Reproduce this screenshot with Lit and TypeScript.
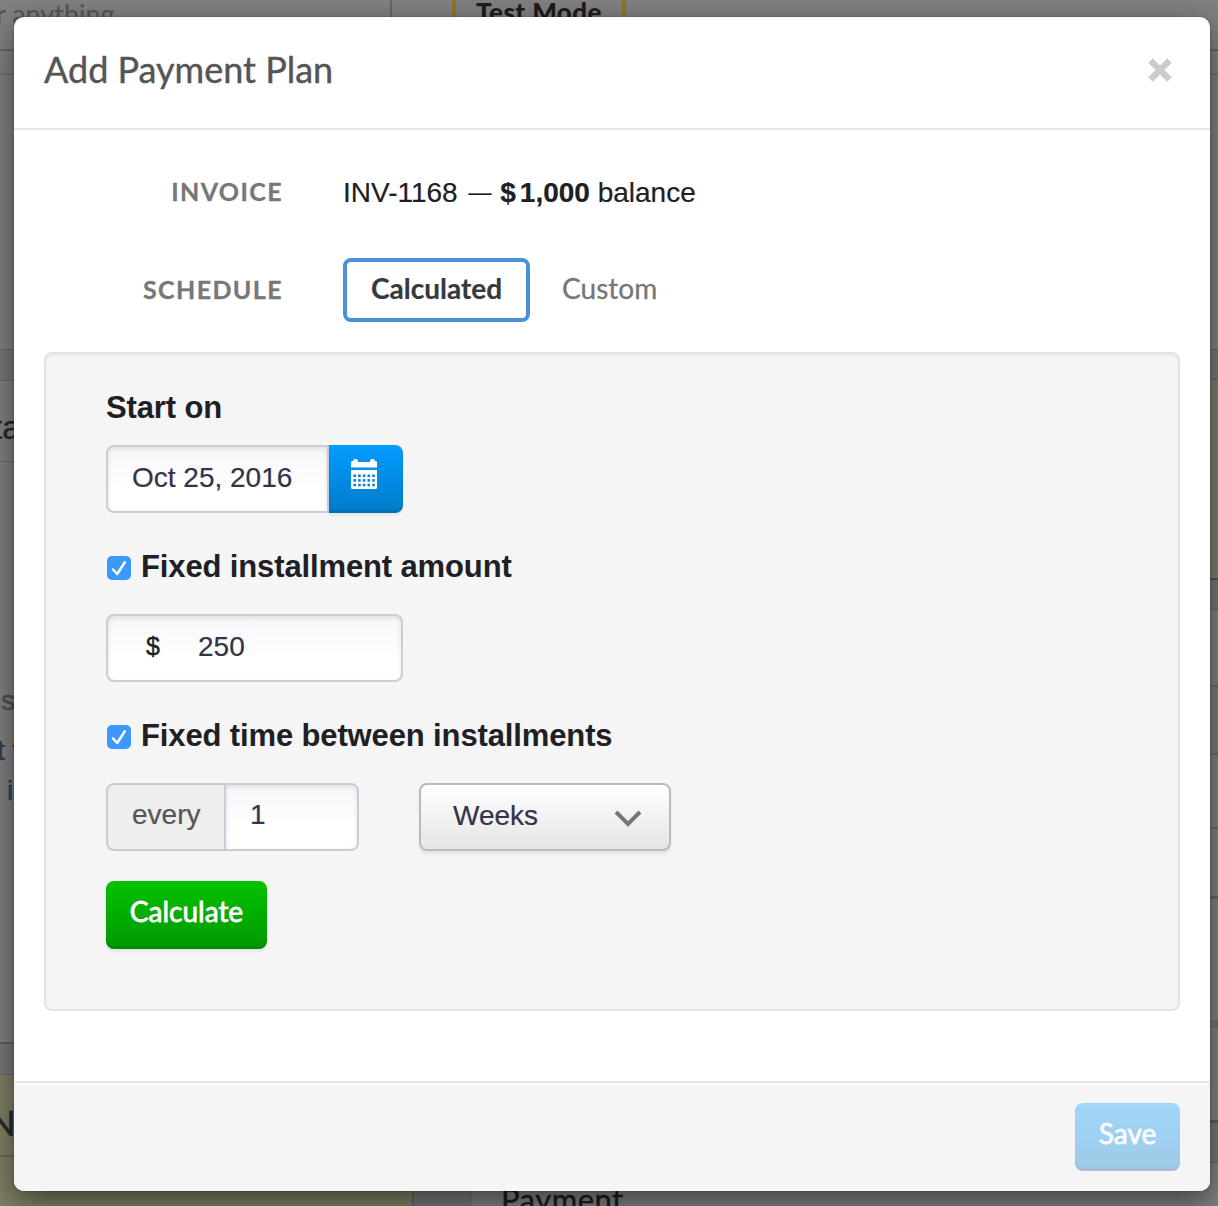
import { LitElement, html, css, svg } from "lit";
import { customElement, state } from "lit/decorators.js";

const calendarDots = [0, 1, 2].flatMap((r) =>
  [0, 1, 2, 3, 4].map((c) => svg`<rect x=${2.4 + c * 4.7} y=${16.5 + r * 4.6} width="2.6" height="2.6" fill="#0384d6"/>`),
);

@customElement("page-backdrop")
class PageBackdrop extends LitElement {
  static styles = css`
    :host { display: flex; flex-direction: column; height: 1206px; overflow: hidden; background: #808080;
      font-family: "Liberation Sans", Arial, sans-serif; }
    * { box-sizing: border-box; }
    .top { display: flex; height: 51px; border-bottom: 2px solid #666; overflow: hidden; }
    .search { width: 392px; border-right: 2px solid #676767; color: #555; font: 27px/28px Lato, sans-serif; white-space: nowrap; }
    .search span { display: block; margin-left: -4px; }
    .mode { margin-left: 60px; width: 174px; border: 4px solid #91752a; border-width: 0 4px; text-align: center;
      font: 900 26px/25px Lato, sans-serif; color: #1c1c1c; letter-spacing: .4px; }
    .sub { height: 24px; border-bottom: 2px solid #717171; }
    .cols { display: flex; flex: 1; }
    .left { width: 412px; }
    .right { flex: 1; }
    .cols, .sec { overflow: hidden; }
    .sec { border-bottom: 1px solid #686868; white-space: nowrap; }
    .alt { background: #7a7a7a; }
    .olive { background: #7f7f66; }
    .right .olive { background: #7e7e70; }
    .gap { background: #777; }
    .h275 { height: 275px; } .h31 { height: 31px; } .h81 { height: 81px; } .h582 { height: 582px; border-bottom: 2px solid #5d5d5d; }
    .h82 { height: 82px; border-bottom: 2px solid #6c6c57; } .rest { height: 100px; }
    .ta { font: 33px/94px "Liberation Sans", sans-serif; color: #282828; margin-left: -7px; -webkit-text-stroke: .3px #282828; }
    .copy { padding-top: 219px; font-size: 28px; line-height: 40px; color: #505050; -webkit-text-stroke: .6px; }
    .l1 { height: 50px; line-height: 40px; margin-left: -5px; } .l2 { height: 40px; margin-left: -3px; color: #333b48; } .l3 { margin-left: 7px; color: #24486e; }
    .note { font: 35px/94px Lato, sans-serif; color: #282828; margin-left: -11px; -webkit-text-stroke: .5px #282828; }
    .h200 { height: 200px; border-bottom: 2px solid #545448; } .h30 { height: 30px; } .h76 { height: 77px; border-bottom-width: 2px; }
    .h68 { height: 68px; border-bottom-width: 2px; } .h74 { height: 74px; border-bottom-width: 2px; } .h70 { height: 70px; border-bottom: 3px solid #656565; }
    .h130 { height: 129px; border-bottom: 8px solid #717171; } .h95 { height: 95px; border-bottom: 3px solid #5d5d5d; }
    .h40 { height: 40px; }
    .pay { font: 31px/72px Lato, sans-serif; color: #1b1b1b; padding-left: 29px; height: 60px; letter-spacing: .5px; -webkit-text-stroke: .4px #1b1b1b; }
    .gutter { width: 60px; background: #777; border-left: 2px solid #666; border-right: 1px solid #707070; }
  `;
  render() {
    return html`
      <div class="top">
        <div class="search"><span>r anything</span></div>
        <div class="mode">Test Mode</div>
      </div>
      <div class="sub"></div>
      <div class="cols">
        <div class="left">
          <div class="sec h275"></div>
          <div class="sec gap h31"></div>
          <div class="sec h81"><div class="ta">ta</div></div>
          <div class="sec h582 copy">
            <div class="l1">is</div><div class="l2">t t</div><div class="l3">i</div>
          </div>
          <div class="sec gap h31"></div>
          <div class="sec olive h82"><div class="note">N</div></div>
          <div class="sec olive rest"></div>
        </div>
        <div class="gutter"></div>
        <div class="right">
          <div class="sec h275"></div>
          <div class="sec gap h30"></div>
          <div class="sec olive h200"></div>
          <div class="sec gap h30"></div>
          <div class="sec h76"></div>
          <div class="sec alt h68"></div>
          <div class="sec h74"></div>
          <div class="sec h70"></div>
          <div class="sec h130"></div>
          <div class="sec h95"></div>
          <div class="sec gap h40"></div>
          <div class="pay">Payment</div>
        </div>
      </div>`;
  }
}

@customElement("check-label")
class CheckLabel extends LitElement {
  static styles = css`
    :host { display: flex; gap: 10px; align-items: center; height: 40px; padding-left: 1px; }
    .box { display: block; width: 24px; height: 24px; margin-top: 2px; }
  `;
  render() {
    return html`<svg class="box" viewBox="0 0 24 24">
        <rect width="24" height="24" rx="5" fill="#3b99fc"/>
        <path d="M6 13.500 10.200 18 17.800 6.200" fill="none" stroke="#fff" stroke-width="2.500" stroke-linecap="round" stroke-linejoin="round"/>
      </svg><slot></slot>`;
  }
}

@customElement("app-root")
class AppRoot extends LitElement {
  @state() mode = "Calculated";

  static styles = css`
    :host { display: block; position: relative; width: 1218px; height: 1206px; overflow: hidden;
      font-family: "Liberation Sans", Arial, sans-serif; font-size: 28px; color: #202024; }
    * { box-sizing: border-box; }
    .modal { position: absolute; left: 14px; top: 17px; width: 1196px; height: 1174px; display: flex; flex-direction: column;
      background: #fff; border-radius: 10px; overflow: hidden; }
    .shade { position: absolute; left: 14px; top: 17px; width: 1196px; height: 1174px; border-radius: 10px;
      box-shadow: 0 10px 30px rgba(0,0,0,.5), 0 0 2px rgba(0,0,0,.35); }
    .head { height: 113px; flex: none; padding: 0 37px 8px 30px; border-bottom: 2px solid #e5e5e5; display: flex; align-items: center; justify-content: space-between; }
    .title { font: 36px/44px Lato, sans-serif; color: #555; -webkit-text-stroke: .4px #555; }
    .close { width: 26px; height: 26px; display: block; margin-top: 2px; }
    .body { flex: 1; padding: 0 30px; }
    .row { display: flex; align-items: center; }
    .inv { height: 66px; margin-top: 30px; }
    .sched { height: 64px; margin-top: 32px; }
    .label { width: 239px; margin-right: 60px; padding-bottom: 2px; text-align: right; font: bold 25px/30px Lato, sans-serif; letter-spacing: 1.400px; color: #777; -webkit-text-stroke: .3px #777; }
    .inv .label { padding-bottom: 4px; }
    .inv-text { white-space: nowrap; padding-bottom: 1px; -webkit-text-stroke: .2px #202024; }
    .dash { font-size: 23px; margin: 0 1px 0 3px; vertical-align: 2px; line-height: 1; }
    .sign { margin-right: 4px; }
    .tab { height: 64px; padding: 0 24px; border: 4px solid transparent; border-radius: 8px; font: 28px/53px Lato, sans-serif; color: #777; -webkit-text-stroke: .3px #777; }
    .tab.on { border-color: #4a90d9; font-weight: bold; color: #363a3f; -webkit-text-stroke: .2px #363a3f; }
    .custom { padding-left: 28px; }
    .panel { margin-top: 30px; height: 659px; padding: 34px 60px; background: #f5f5f5; border: 2px solid #e3e3e3; border-radius: 8px;
      box-shadow: inset 0 2px 3px rgba(0,0,0,.05); }
    .strong { font-weight: bold; font-size: 31px; line-height: 40px; letter-spacing: -.13px; white-space: nowrap; }
    .field { height: 68px; border: 2px solid #caccd8; border-radius: 8px; background: linear-gradient(#f7f7fa, #fff 70%);
      box-shadow: inset 0 2px 5px rgba(0,0,0,.1); color: #33334a; line-height: 61px; white-space: nowrap; -webkit-text-stroke: .2px #33334a; }
    .date { width: 223px; padding-left: 24px; border-radius: 8px 0 0 8px; }
    .datebtn { width: 74px; height: 68px; padding: 13px 0 0 22px; border-radius: 0 8px 8px 0; background: linear-gradient(#049cff, #007bc8);
      box-shadow: 0 3px 2px rgba(0,0,0,.05), inset 0 -3px 2px rgba(0,0,0,.1); }
    .cal { display: block; }
    .g1 { margin-top: 17px; } .g2 { margin-top: 34px; } .g3 { margin-top: 27px; } .g4 { margin-top: 30px; }
    .amount { width: 297px; display: flex; }
    .cur { width: 90px; padding-left: 38px; font-size: 25px; color: #202024; -webkit-text-stroke: .4px #202024; }
    .every { width: 118px; height: 68px; padding-left: 24px; border: 2px solid #ccc; border-right: 0; border-radius: 8px 0 0 8px;
      background: #eee; color: #555; line-height: 60px; -webkit-text-stroke: .2px #555; }
    .count { width: 135px; padding-left: 24px; border-radius: 0 8px 8px 0; line-height: 59px; }
    .select { margin-left: 60px; width: 252px; height: 68px; display: flex; justify-content: space-between; align-items: center;
      padding: 0 27px 3px 32px; border: 2px solid #bbb; border-radius: 8px; background: linear-gradient(#fff, #e5e5e5); color: #33334a;
      box-shadow: 0 3px 3px rgba(0,0,0,.07); -webkit-text-stroke: .2px #33334a; }
    .chev { margin-top: 6px; display: block; }
    .btn { height: 68px; border-radius: 8px; color: #fff; font: 28px/60px Lato, sans-serif; text-align: center; }
    .calc { width: 161px; background: linear-gradient(#05c200, #009900); box-shadow: 0 3px 3px rgba(0,0,0,.07), inset 0 -3px 2px rgba(0,0,0,.1);
      text-shadow: 0 -1px 1px rgba(0,0,0,.2); -webkit-text-stroke: .8px #fff; }
    .foot { height: 110px; flex: none; padding: 20px 30px; border-top: 2px solid #e5e5e5; background: #f5f5f5; box-shadow: inset 0 2px 1px #fafafa;
      display: flex; justify-content: flex-end; }
    .save { width: 105px; color: #f8fafc; background: linear-gradient(#9fd7fa, #9ecae6); box-shadow: inset 0 -3px 1px rgba(180,180,200,.6);
      -webkit-text-stroke: .9px #f8fafc; text-shadow: 0 -1px 1px rgba(0,0,0,.08); }
  `;

  render() {
    return html`
      <page-backdrop></page-backdrop>
      <div class="shade"></div>
      <div class="modal">
        <div class="head">
          <div class="title">Add Payment Plan</div>
          <svg class="close" viewBox="0 0 26 26"><path d="M3.500 3.500 22.500 22.500M22.500 3.500 3.500 22.500" stroke="#ccc" stroke-width="6.500"/></svg>
        </div>
        <div class="body">
          <div class="row inv"><div class="label">INVOICE</div><div class="inv-text">INV-1168 <span class="dash">—</span> <b><span class="sign">$</span>1,000</b> balance</div></div>
          <div class="row sched">
            <div class="label">SCHEDULE</div>
            ${["Calculated", "Custom"].map((m) => html`<div class="tab ${m === this.mode ? "on" : "custom"}" @click=${() => (this.mode = m)}>${m}</div>`)}
          </div>
          <div class="panel">
            <div class="strong">Start on</div>
            <div class="row g1">
              <div class="field date">Oct 25, 2016</div>
              <div class="datebtn"><svg class="cal" width="26" height="32" viewBox="0 0 26 32">
                <path d="M0 9.500V4.500Q0 3 1.500 3H2V3Q2 1 4.500 1T7 3V4H19V3Q19 1 21.500 1T24 3H24.500Q26 3 26 4.500V9.500Z M0 12H26V29.500Q26 31 24.500 31H1.500Q0 31 0 29.500Z" fill="#fff"/>
                ${calendarDots}</svg></div>
            </div>
            <check-label class="strong g2">Fixed installment amount</check-label>
            <div class="field amount g3"><span class="cur">$</span><span>250</span></div>
            <check-label class="strong g2">Fixed time between installments</check-label>
            <div class="row g3">
              <div class="every">every</div><div class="field count">1</div>
              <div class="select"><span>Weeks</span><svg class="chev" width="28" height="18" viewBox="0 0 28 18"><path d="M2 2 14 14 26 2" fill="none" stroke="#777" stroke-width="4"/></svg></div>
            </div>
            <div class="btn calc g4">Calculate</div>
          </div>
        </div>
        <div class="foot"><div class="btn save">Save</div></div>
      </div>`;
  }
}
